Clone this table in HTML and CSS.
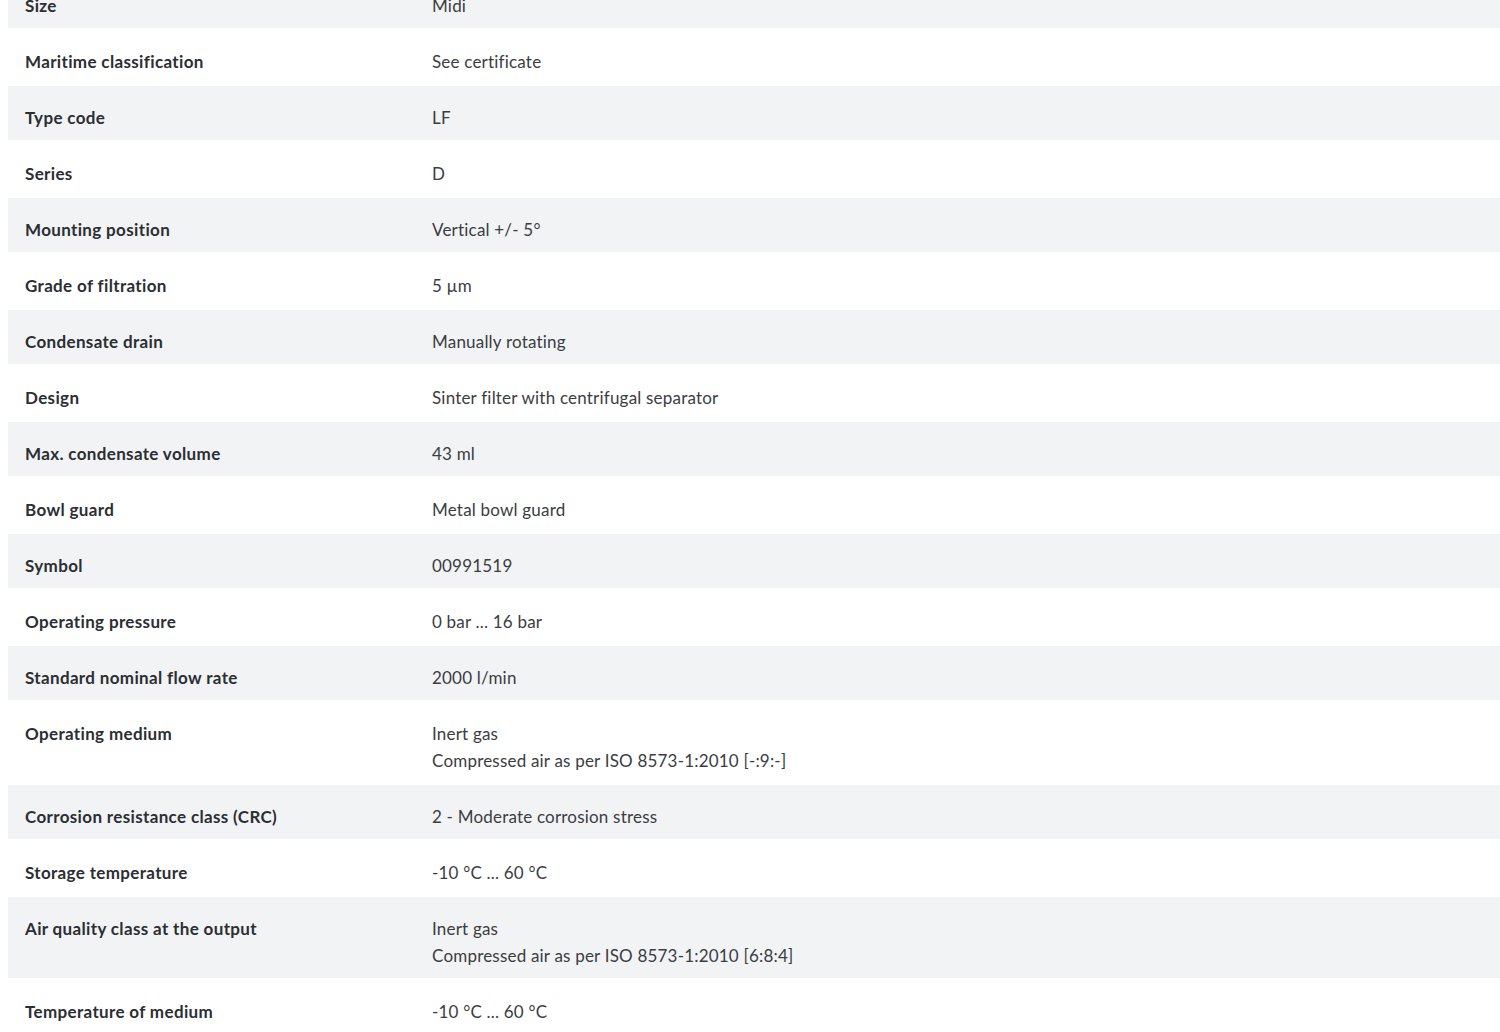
FILE: index.html
```html
<!DOCTYPE html>
<html lang="en">
<head>
<meta charset="utf-8">
<title>Technical data</title>
<link rel="stylesheet" href="styles.css">
</head>
<body>
<div class="specs">
  <div class="row"><div class="label">Size</div><div class="value">Midi</div></div>
  <div class="row"><div class="label">Maritime classification</div><div class="value">See certificate</div></div>
  <div class="row"><div class="label">Type code</div><div class="value">LF</div></div>
  <div class="row"><div class="label">Series</div><div class="value">D</div></div>
  <div class="row"><div class="label">Mounting position</div><div class="value">Vertical +/- 5°</div></div>
  <div class="row"><div class="label">Grade of filtration</div><div class="value">5 µm</div></div>
  <div class="row"><div class="label">Condensate drain</div><div class="value">Manually rotating</div></div>
  <div class="row"><div class="label">Design</div><div class="value">Sinter filter with centrifugal separator</div></div>
  <div class="row"><div class="label">Max. condensate volume</div><div class="value">43 ml</div></div>
  <div class="row"><div class="label">Bowl guard</div><div class="value">Metal bowl guard</div></div>
  <div class="row"><div class="label">Symbol</div><div class="value">00991519</div></div>
  <div class="row"><div class="label">Operating pressure</div><div class="value">0 bar ... 16 bar</div></div>
  <div class="row"><div class="label">Standard nominal flow rate</div><div class="value">2000 l/min</div></div>
  <div class="row"><div class="label">Operating medium</div><div class="value"><div>Inert gas</div><div>Compressed air as per ISO 8573-1:2010 [-:9:-]</div></div></div>
  <div class="row"><div class="label">Corrosion resistance class (CRC)</div><div class="value">2 - Moderate corrosion stress</div></div>
  <div class="row"><div class="label">Storage temperature</div><div class="value">-10 °C ... 60 °C</div></div>
  <div class="row"><div class="label">Air quality class at the output</div><div class="value"><div>Inert gas</div><div>Compressed air as per ISO 8573-1:2010 [6:8:4]</div></div></div>
  <div class="row"><div class="label">Temperature of medium</div><div class="value">-10 °C ... 60 °C</div></div>
</div>
</body>
</html>
```

FILE: styles.css
```css
html, body {
  margin: 0;
  padding: 0;
  background: #ffffff;
}

body {
  padding-left: 8px;
  font-family: Lato, "Open Sans", sans-serif;
  font-size: 17px;
  color: #333333;
  overflow: hidden;
}

.specs {
  margin-top: -27px;
}

.row {
  display: grid;
  grid-template-columns: 407px 1fr;
  padding: 18px 17px 9px;
  line-height: 27px;
  border-top: 1px solid #ffffff;
  border-bottom: 1px solid #ffffff;
}

.row:nth-child(odd) {
  background: #f2f3f4;
}

.label {
  font-weight: 700;
  color: #2b2e33;
  letter-spacing: 0.35px;
}

.value {
  color: #3a3d42;
  letter-spacing: 0.2px;
}
```
